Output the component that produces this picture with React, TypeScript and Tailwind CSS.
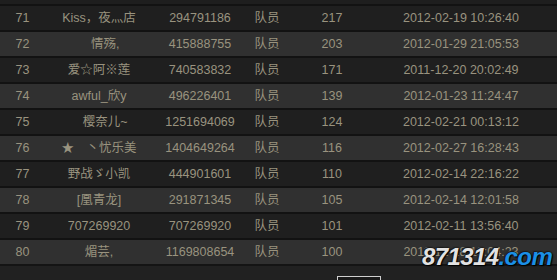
const rows = [
  { no: 71, name: 'Kiss，夜灬店', qq: '294791186', role: '队员', pts: 217, time: '2012-02-19 10:26:40' },
  { no: 72, name: '　情殇,', qq: '415888755', role: '队员', pts: 203, time: '2012-01-29 21:05:53' },
  { no: 73, name: '爱☆阿※莲', qq: '740583832', role: '队员', pts: 171, time: '2011-12-20 20:02:49' },
  { no: 74, name: 'awful_欣y', qq: '496226401', role: '队员', pts: 139, time: '2012-01-23 11:24:47' },
  { no: 75, name: '　樱奈儿~', qq: '1251694069', role: '队员', pts: 124, time: '2012-02-21 00:13:12' },
  { no: 76, name: '★　丶忧乐美', qq: '1404649264', role: '队员', pts: 116, time: '2012-02-27 16:28:43' },
  { no: 77, name: '野战ゞ小凯', qq: '444901601', role: '队员', pts: 110, time: '2012-02-14 22:16:22' },
  { no: 78, name: '[凰青龙]', qq: '291871345', role: '队员', pts: 105, time: '2012-02-14 12:01:58' },
  { no: 79, name: '707269920', qq: '707269920', role: '队员', pts: 101, time: '2012-02-11 13:56:40' },
  { no: 80, name: '煝芸,', qq: '1169808654', role: '队员', pts: 100, time: '2011-12-18 19:04:23' },
];

const App = () => {
  return (
    <div
      className="relative w-[557px] h-[280px] overflow-hidden bg-[#1f1f1f] text-[12.5px] text-[#99937f]"
      style={{ fontFamily: '"Liberation Sans", "Noto Sans CJK SC", sans-serif' }}
    >
      <div className="h-[4px] bg-[#1e1e1e]" />
      {rows.map((r, i) => (
        <div
          key={r.no}
          className={`grid grid-cols-[45px_108px_94px_40px_90px_168px] h-[26px] items-center border-t-2 border-[#121212] leading-none ${
            i % 2 === 0 ? 'bg-[#1f1f1f]' : 'bg-[#303030]'
          }`}
        >
          <div className="text-center">{r.no}</div>
          <div className="text-center whitespace-pre">{r.name}</div>
          <div className="text-center">{r.qq}</div>
          <div className="text-center">{r.role}</div>
          <div className="text-center">{r.pts}</div>
          <div className="text-center">{r.time}</div>
        </div>
      ))}
      <div className="border-t-2 border-[#141414] bg-[#212121] h-[20px] flex">
        <div className="ml-[337px] mt-[10px] w-[44px] h-[12px] border border-[#cfcfcf] bg-[#1a1a1a]" />
      </div>

      {/* watermark */}
      <div
        className="absolute left-[422px] top-[245px] italic font-bold text-[24px] leading-none tracking-[-0.6px] [text-shadow:0_0_2px_#000,1px_1px_1px_#000,-1px_-1px_1px_#222]"
        style={{ fontFamily: '"Liberation Sans", Arial, sans-serif' }}
      >
        <span className="text-[#e2e2e2]">871314</span>
        <span className="text-[#1b8fe6]">.com</span>
      </div>
    </div>
  );
};

export default App;
